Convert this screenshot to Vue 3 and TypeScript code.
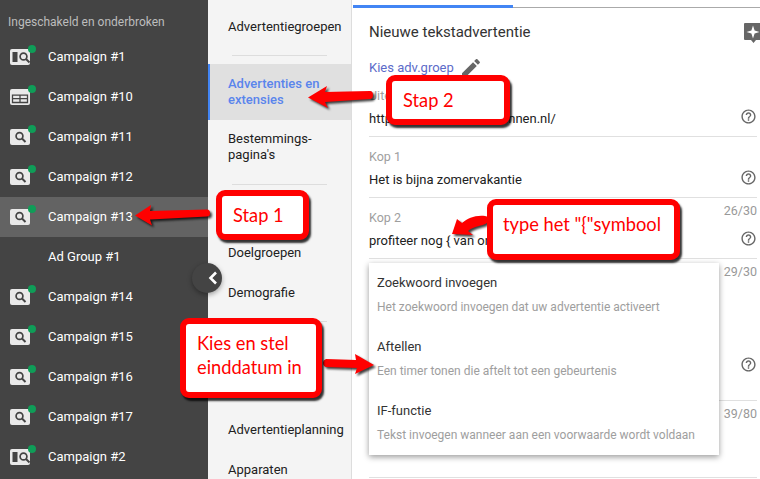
<script setup lang="ts">
type Kind = 'split' | 'display' | 'search'
interface Campaign { name: string; kind?: Kind; active?: boolean }
interface Field { label: string; value: string; counter?: string; help?: boolean; cls?: string }

const campaigns: Campaign[] = [
  { name: 'Campaign #1', kind: 'split' },
  { name: 'Campaign #10', kind: 'display' },
  { name: 'Campaign #11', kind: 'search' },
  { name: 'Campaign #12', kind: 'search' },
  { name: 'Campaign #13', kind: 'search', active: true },
  { name: 'Ad Group #1' },
  { name: 'Campaign #14', kind: 'search' },
  { name: 'Campaign #15', kind: 'search' },
  { name: 'Campaign #16', kind: 'search' },
  { name: 'Campaign #17', kind: 'search' },
  { name: 'Campaign #2', kind: 'split' },
]

const fields: Field[] = [
  { label: 'Uiteindelijke URL', value: 'https://www.adverteerbinnen.nl/', help: true },
  { label: 'Kop 1', value: 'Het is bijna zomervakantie', help: true },
  { label: 'Kop 2', value: 'profiteer nog { van onze', counter: '26/30', help: true },
  { label: '', value: '', counter: '29/30', help: true, cls: 'tall' },
  { label: '', value: '', counter: '39/80', cls: 'last' },
]

const menu = [
  { title: 'Zoekwoord invoegen', desc: 'Het zoekwoord invoegen dat uw advertentie activeert' },
  { title: 'Aftellen', desc: 'Een timer tonen die aftelt tot een gebeurtenis' },
  { title: 'IF-functie', desc: 'Tekst invoegen wanneer aan een voorwaarde wordt voldaan' },
]
</script>

<template>
  <div class="page">
    <aside class="side">
      <div class="side-head">Ingeschakeld en onderbroken</div>
      <div v-for="c in campaigns" :key="c.name" class="row" :class="{ active: c.active }">
        <span class="ico">
          <svg v-if="c.kind" width="26" height="24" viewBox="0 0 26 24">
            <rect x="0" y="5" width="20" height="16" rx="2" fill="#e9e9e9" />
            <template v-if="c.kind === 'split'">
              <rect x="2.500" y="8" width="5" height="10" fill="#444" />
              <circle cx="13.500" cy="12.500" r="3.400" fill="none" stroke="#444" stroke-width="1.700" />
              <path d="M16 15l3.500 3.500" stroke="#444" stroke-width="2" />
            </template>
            <template v-else-if="c.kind === 'display'">
              <path d="M2.500 11.200h15v7.300h-15zM10 11.200v7.300M2.500 14.600h15" fill="none" stroke="#444" stroke-width="1.300" />
            </template>
            <template v-else>
              <circle cx="9.500" cy="12" r="3.400" fill="none" stroke="#444" stroke-width="1.700" />
              <path d="M12 14.500l3.500 3.500" stroke="#444" stroke-width="2" />
            </template>
            <circle cx="22" cy="5" r="4" fill="#0f9d58" />
          </svg>
        </span>
        <span class="row-name">{{ c.name }}</span>
      </div>
    </aside>

    <nav class="sub">
      <div class="sub-item one">Advertentiegroepen</div>
      <div class="sub-rule"></div>
      <div class="sub-item current">Advertenties en extensies</div>
      <div class="sub-item two">Bestemmings-<br />pagina's</div>
      <div class="sub-rule"></div>
      <div class="sub-gap first"></div>
      <div class="sub-item one">Doelgroepen</div>
      <div class="sub-item one">Demografie</div>
      <div class="sub-rule lower"></div>
      <div class="sub-gap second"></div>
      <div class="sub-item one">Advertentieplanning</div>
      <div class="sub-item one">Apparaten</div>
    </nav>

    <main class="main">
      <div class="topline"><span></span></div>
      <header class="title-row">
        <h1>Nieuwe tekstadvertentie</h1>
        <svg class="spark" width="18" height="22" viewBox="0 0 18 22">
          <path d="M1 0h17v17h-6l-2.500 3-2.500-3H1a1 1 0 0 1-1-1V1a1 1 0 0 1 1-1z" fill="#666" />
          <path d="M9 2.500l1.600 4.900 4.900 1.600-4.900 1.600L9 15.500l-1.600-4.900L2.500 9l4.900-1.600z" fill="#fff" />
        </svg>
      </header>
      <div class="group-row">
        <a class="group-link">Kies adv.groep</a>
        <svg width="24" height="24" viewBox="0 0 24 24">
          <path fill="#666" d="M3 17.250V21h3.750L17.810 9.940l-3.750-3.750L3 17.250zM20.710 7.040c.39-.39.39-1.020 0-1.410l-2.340-2.340c-.39-.39-1.020-.39-1.410 0l-1.830 1.830 3.750 3.750 1.830-1.830z" />
        </svg>
      </div>
      <div v-for="(f, i) in fields" :key="i" class="field" :class="f.cls">
        <div class="f-label">{{ f.label }}</div>
        <div class="f-count">{{ f.counter }}</div>
        <div class="f-value">{{ f.value }}</div>
        <svg v-if="f.help" class="f-help" width="17" height="17" viewBox="0 0 24 24">
          <path fill="#666" d="M11 18h2v-2h-2v2zm1-16C6.480 2 2 6.480 2 12s4.480 10 10 10 10-4.480 10-10S17.520 2 12 2zm0 18c-4.410 0-8-3.590-8-8s3.590-8 8-8 8 3.590 8 8-3.590 8-8 8zm0-14c-2.210 0-4 1.790-4 4h2c0-1.100.9-2 2-2s2 .9 2 2c0 2-3 1.750-3 5h2c0-2.250 3-2.500 3-5 0-2.210-1.790-4-4-4z" />
        </svg>
      </div>
    </main>

    <div class="menu">
      <div v-for="m in menu" :key="m.title" class="menu-item">
        <div class="menu-title">{{ m.title }}</div>
        <div class="menu-desc">{{ m.desc }}</div>
      </div>
    </div>

    <button class="collapse" aria-label="Inklappen">
      <svg width="12" height="14" viewBox="0 0 12 14">
        <path d="M9 1.500L3.500 7 9 12.500" fill="none" stroke="#fff" stroke-width="2.600" />
      </svg>
    </button>

    <svg class="arrows" width="760" height="479" viewBox="0 0 760 479">
      <path fill="#f00" d="M135 215.500L151 205l-1 6 57-1.500q3 0 3 3.500t-3 3.500l-57 3 2 6z" />
      <path fill="#f00" d="M308 97.500L327 86l-2 6 45-1q3 0 3 4t-3 4l-45 3 3 6z" />
      <path fill="#f00" d="M452 234l5-15 5 4c6-5 13-8 23-7q6 1 3 5c-1 3-5 4-9 5-5 1-9 3-11 5l5 4z" />
      <path fill="#f00" d="M374 365l-19-11 1 6-30-1q-3 1-3 4t3 4l31 1-2 6z" />
    </svg>

    <div class="note stap2">Stap 2</div>
    <div class="note stap1">Stap 1</div>
    <div class="note typ">type het "{"symbool</div>
    <div class="note kies">Kies en stel<br />einddatum in</div>
  </div>
</template>

<style>
html, body { margin: 0; background: #fff; }
</style>

<style scoped>
.page {
  position: relative;
  display: flex;
  width: 760px;
  height: 479px;
  overflow: hidden;
  font-family: Roboto, "Liberation Sans", sans-serif;
  font-size: 14px;
  color: #212121;
  background: #fff;
}

.side {
  width: 208px;
  flex: none;
  background: #444;
  color: #fff;
}
.side-head {
  height: 37px;
  padding: 14px 0 0 8px;
  box-sizing: border-box;
  font-size: 12px;
  line-height: 16px;
  color: #bdbdbd;
}
.row {
  display: flex;
  align-items: center;
  height: 40px;
}
.row.active { background: #636363; }
.ico {
  display: block;
  width: 48px;
  height: 24px;
  padding-left: 10px;
  box-sizing: border-box;
  margin-top: -2px;
  flex: none;
}
.ico svg { display: block; overflow: visible; }
.row-name {
  font-size: 13px;
  line-height: 16px;
  margin-top: -1px;
}

.sub {
  width: 144px;
  flex: none;
  box-sizing: border-box;
  background: #f4f4f4;
  border-right: 1px solid #ddd;
  font-size: 13px;
}
.sub-item { padding-left: 20px; line-height: 16px; }
.sub-item.one { height: 40px; display: flex; align-items: center; }
.sub-item.two { padding: 11px 0 21px 20px; }
.sub-rule { height: 1px; background: #ddd; margin: 0 24px; }
.sub-rule.lower { margin-top: 8px; }
.sub > .sub-item:first-child { margin-top: 7px; margin-bottom: 8px; }
.current {
  margin-top: 8px;
  padding: 12px 12px 12px 18px;
  border-left: 2px solid #4285f4;
  background: #e0e0e0;
  color: #5a85ec;
  font-weight: 500;
  height: 56px;
  box-sizing: border-box;
}
.sub-gap.first { height: 48px; }
.sub-gap.second { height: 88px; }

.main {
  flex: 1;
  min-width: 0;
  box-sizing: border-box;
  padding: 0 3px 0 17px;
  position: relative;
}
.topline {
  position: absolute;
  left: 1px;
  right: 0;
  top: 5px;
  height: 3px;
  box-sizing: border-box;
  border-bottom: 1px solid #aaa;
}
.topline span {
  display: block;
  width: 160px;
  height: 3px;
  background: #4285f4;
}
.title-row {
  display: flex;
  justify-content: space-between;
  height: 44px;
  padding-top: 21px;
  margin-right: -3px;
}
.title-row h1 {
  margin: 0;
  font-size: 15px;
  font-weight: 400;
  line-height: 22px;
  color: #333;
}
.spark { margin-top: 2px; margin-right: -2px; flex: none; }
.group-row {
  display: flex;
  align-items: center;
  height: 12px;
  gap: 5px;
  margin-top: -3px;
  margin-bottom: 2px;
}
.group-link { color: #5c6bc9; font-size: 13px; line-height: 16px; }
.field {
  display: grid;
  grid-template-columns: 1fr auto;
  grid-template-rows: 31px 24px;
  height: 61px;
  box-sizing: border-box;
  border-bottom: 1px solid #e0e0e0;
}
.field.tall { height: 142px; grid-template-rows: 31px 1fr; }
.field.last { height: 77px; }
.f-label { padding-top: 12px; line-height: 16px; font-size: 12.500px; color: #9e9e9e; }
.f-count { padding-top: 5px; line-height: 16px; font-size: 12.500px; color: #999; text-align: right; }
.f-value { line-height: 24px; white-space: nowrap; overflow: hidden; font-size: 13px; }
.f-help { justify-self: end; margin-top: 1px; }
.field.tall .f-help { align-self: end; margin-bottom: 27px; }

.menu {
  position: absolute;
  left: 369px;
  top: 263px;
  width: 350px;
  height: 192px;
  background: #fff;
  box-shadow: 0 2px 6px rgba(0, 0, 0, 0.4);
}
.menu-item { height: 64px; padding: 10px 8px 0; box-sizing: border-box; }
.menu-title { font-size: 13px; line-height: 20px; color: #333; }
.menu-desc { font-size: 12px; line-height: 16px; margin-top: 6px; color: #9e9e9e; }

.collapse {
  position: absolute;
  left: 192px;
  top: 263px;
  width: 30px;
  height: 30px;
  padding: 0 0 0 15px;
  border: 0;
  border-radius: 50%;
  background: #444;
  box-shadow: 0 2px 5px rgba(0, 0, 0, 0.35);
}
.collapse svg { display: block; }

.arrows {
  position: absolute;
  left: 0;
  top: 0;
  filter: drop-shadow(2px 2px 1px rgba(0, 0, 0, 0.75));
  pointer-events: none;
}

.note {
  position: absolute;
  box-sizing: border-box;
  background: #fff;
  border: 6px solid #f00;
  border-radius: 9px;
  box-shadow: 2px 3px 2px rgba(0, 0, 0, 0.8);
  color: #f00;
  font-family: Lato, "Open Sans", sans-serif;
  font-size: 18.300px;
  line-height: 24px;
  white-space: nowrap;
}
.stap2 { left: 386px; top: 75px; width: 124px; height: 50px; padding: 7px 0 0 11px; }
.stap1 { left: 216px; top: 190px; width: 93px; height: 50px; padding: 7px 0 0 11px; }
.typ { left: 487px; top: 199px; width: 193px; height: 61px; padding: 7px 0 0 10px; }
.kies { left: 180px; top: 318px; width: 142px; height: 80px; padding: 7px 0 0 11px; }
</style>
